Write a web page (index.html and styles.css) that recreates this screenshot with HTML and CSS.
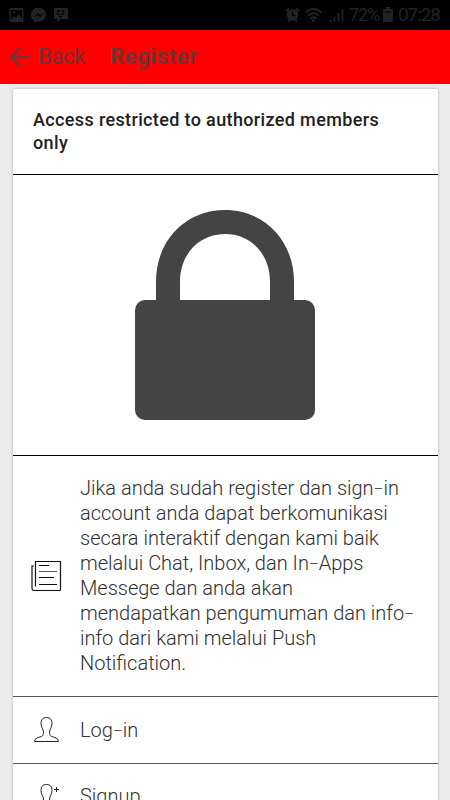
FILE: index.html
```html
<!DOCTYPE html>
<html lang="id">
<head>
<meta charset="utf-8">
<title>Register</title>
<link rel="stylesheet" href="styles.css">
</head>
<body>
<div class="status">
  <div class="status-left">
    <svg width="62" height="16" viewBox="0 0 62 16">
      <path fill="currentColor" fill-rule="evenodd" d="M1.5 1h12q1 0 1 1v12q0 1-1 1h-12q-1 0-1-1v-12q0-1 1-1zM2 3v10l3-4 2 2 3-4 3 5V3zM4 4h2v2h-2z"/>
      <path fill="currentColor" fill-rule="evenodd" d="M29.500 .8a7.500 7 0 0 1 0 14l-2 -.2-2.500 1.200v-2.300a7 7 0 0 1 4.500-12.700zM25 10l4-2 2 2 4-4-4 2-2-2z"/>
      <path fill="currentColor" d="M46 1h12q1 0 1 1v9q0 1-1 1h-6l-4 3v-3h-2q-1 0-1-1v-9q0-1 1-1z"/>
      <path stroke="#000" stroke-width="1.300" d="M48 4h3M52.500 4h3M47.500 7h3M52 7h3M50 9.500h3"/>
    </svg>
  </div>
  <div class="status-right">
    <svg width="60" height="16" viewBox="0 0 60 16">
      <circle cx="7.500" cy="8" r="5.800" fill="currentColor"/>
      <path fill="none" stroke="currentColor" stroke-width="2" d="M1 4.500l3-3M14 4.500l-3-3M3 14.500l2-2M12 14.500l-2-2"/>
      <path fill="none" stroke="#000" stroke-width="1.300" d="M7.500 4.500v4h3"/>
      <path fill="none" stroke="currentColor" stroke-width="1.700" d="M20.500 5.500q8-7 16 0M23 8.500q5.500-4.500 11 0M25.500 11.500q3-2.500 6 0"/>
      <circle cx="28.500" cy="13.500" r="1.500" fill="currentColor"/>
      <path stroke="currentColor" stroke-width="1.700" d="M45.500 15v-2M49.500 15v-5M53.500 15v-9M57.500 15v-13"/>
    </svg>
    <span class="percent">72%</span>
    <svg class="battery" width="10" height="16" viewBox="0 0 10 16"><path fill="currentColor" d="M3 0h4v2h2q1 0 1 1v11q0 1-1 1h-8q-1 0-1-1v-11q0-1 1-1h2z"/><path stroke="#000" d="M2 5h6"/></svg>
    <span class="clock">07:28</span>
  </div>
</div>
<header class="toolbar">
  <svg class="arrow" width="22" height="22" viewBox="0 0 22 22"><path fill="none" stroke="currentColor" stroke-width="2.600" d="M11 2l-9 9 9 9M2 11h19"/></svg>
  <span class="back">Back</span>
  <h1 class="title">Register</h1>
</header>
<main class="card">
  <h2 class="heading">Access restricted to authorized members<br>only</h2>
  <div class="lock">
    <svg width="180" height="210" viewBox="0 0 180 210"><rect y="90" width="180" height="120" rx="10" fill="#444"/><path fill="#444" d="M21 92V72C21 29 52 0 90 0s69 29 69 72v20h-24V72c0-28-19-48-45-48s-45 20-45 48v20z"/></svg>
  </div>
  <div class="row info">
    <svg class="icon" width="32" height="32" viewBox="0 0 32 32" fill="none" stroke="#111"><path stroke-width="1.200" d="M5.500 26.500V1.500h25v28q0 1-1 1H3.500q-1.500 0-1.500-2V6h2"/><path d="M9 5.500h10M9 17.500h15" stroke-width="1"/><path d="M9 11.500h18" stroke="#555"/><path d="M9 24.500h18"/></svg>
    <p class="text">Jika anda sudah register dan sign<span class="dash">–</span>in<br>account anda dapat berkomunikasi<br>secara interaktif dengan kami baik<br>melalui Chat, Inbox, dan In<span class="dash">–</span>Apps<br>Messege dan anda akan<br>mendapatkan pengumuman dan info<span class="dash">–</span><br>info dari kami melalui Push<br>Notification.</p>
  </div>
  <div class="row">
    <svg class="icon" width="32" height="32" viewBox="0 0 32 32" fill="none" stroke="#222"><path d="M16.500 3.500c-4 0-5.500 2.500-5.500 6 0 4 2.500 6 2.500 8.500 0 5-2.500 4.500-5.500 5.500q-3.500 1-3.500 4h24q0-3-3.500-4c-3-1-5.500-.5-5.500-5.500 0-2.500 2.500-4.500 2.500-8.500 0-3.500-1.500-6-5.500-6z"/></svg>
    <p class="text">Log<span class="dash">–</span>in</p>
  </div>
  <div class="row signup">
    <svg class="icon" width="32" height="32" viewBox="0 0 32 32" fill="none" stroke="#222"><path d="M16.500 3.500c-4 0-5.500 2.500-5.500 6 0 4 2.500 6 2.500 8.500 0 5-2.500 4.500-5.500 5.500q-3.500 1-3.500 4h24q0-3-3.500-4c-3-1-5.500-.5-5.500-5.500 0-2.500 2.500-4.500 2.500-8.500 0-3.500-1.500-6-5.500-6zM24 8.500h5M26.500 6v5"/></svg>
    <p class="text">Signup</p>
  </div>
</main>
</body>
</html>
```
FILE: styles.css
```css
* { box-sizing: border-box; }
html, body { height: 800px; margin: 0; overflow: hidden; }
body { background: #ebebeb; font-family: Roboto, sans-serif; color: #212121; }
svg { display: block; flex: none; }
h1, h2, p { margin: 0; }
.status {
  height: 30px; background: #000; color: #222322;
  display: flex; justify-content: space-between; align-items: center;
  padding: 0 10px 0 9px;
}
.status-right { display: flex; align-items: center; }
.percent, .clock { font-size: 19px; line-height: 30px; white-space: nowrap; }
.percent { width: 30px; margin-left: 4px; font-size: 18px; letter-spacing: -1.1px; }
.battery { margin: 0 5px 0 4px; }
.clock { width: 42px; letter-spacing: -1.1px; }
.toolbar {
  height: 54px; background: #f00; color: #703434;
  display: flex; align-items: center; padding: 0 0 2px 9px;
}
.arrow { margin-top: 2px; }
.back { width: 72px; margin-left: 7px; font-size: 22px; letter-spacing: -.4px; }
.title { font-size: 22px; font-weight: 700; letter-spacing: .6px; }
.card {
  margin: 5px 12px 0 13px; background: #fff; border-radius: 2px 2px 0 0;
  height: 730px; box-shadow: 0 0 3px rgba(0,0,0,.25);
}
.heading {
  height: 86px; padding: 19px 20px; border-bottom: 1px solid #000;
  font-size: 18px; line-height: 23px; font-weight: 500; white-space: nowrap;
  letter-spacing: .36px;
}
.lock { height: 281px; padding: 35px 0 0 122px; border-bottom: 1px solid #000; }
.row {
  height: 67px; display: flex; align-items: center;
  padding-left: 17px; border-bottom: 1px solid #555;
}
.row.info { height: 241px; }
.row.signup { height: 66px; }
.icon { margin-right: 18px; }
.text { font-size: 20px; line-height: 25px; font-weight: 300; color: #303030; white-space: nowrap; }
.dash { font-size: 15px; line-height: 0; vertical-align: 1px; }
```
